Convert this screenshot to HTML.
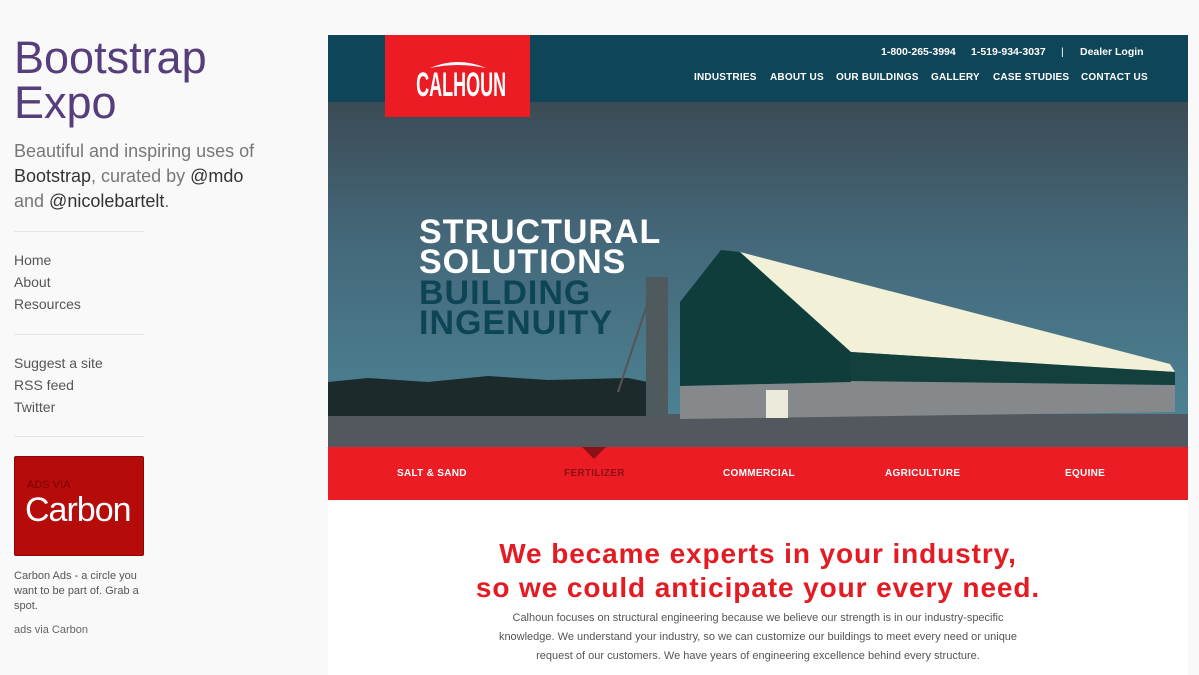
<!DOCTYPE html>
<html><head><style>
*{margin:0;padding:0;box-sizing:border-box}
body{width:1199px;height:671px;overflow:hidden;background:#f9f9f9;font-family:"Liberation Sans",sans-serif;position:relative}
h1{position:absolute;left:14px;top:35px;font-weight:400;font-size:45px;line-height:45px;color:#563d7c;width:260px}
.tag{position:absolute;left:14px;top:139px;font-size:18px;line-height:25px;color:#777;width:260px}
.tag b{font-weight:400;color:#333}
.hr{position:absolute;left:14px;width:130px;border-top:1px solid #e5e5e5}
.nav{position:absolute;left:14px;font-size:14px;line-height:22px;color:#555}
.ad{position:absolute;left:14px;top:456px;width:130px;height:100px;background:#b50b0b;border:1px solid #8a0505;border-radius:2px;color:#fff;overflow:hidden}
.small{position:absolute;left:14px;font-size:11px;line-height:15px;color:#555;width:130px}
.panel{position:absolute;left:328px;top:35px;width:860px;height:640px;background:#fff;overflow:hidden}
.hdr{position:absolute;left:0;top:0;width:860px;height:67px;background:#0f4558}
.logo{position:absolute;left:57px;top:0;width:145px;height:82px;background:#ec1c24;z-index:3}
.logo span{display:block;position:absolute;left:-3px;width:145px;top:31px;line-height:38px;text-align:center;color:#fff;font-weight:700;font-size:34px;transform:scaleX(.53)}
.top{position:absolute;top:11px;font-size:10.5px;font-weight:700;color:#fff}
.mn{position:absolute;top:37px;font-size:10px;font-weight:700;color:#fff;letter-spacing:.2px}
.hero{position:absolute;left:0;top:67px;width:860px;height:345px}
.ht{position:absolute;left:91px;font-weight:900;font-size:34px;line-height:30px;letter-spacing:1px}
.red{position:absolute;left:0;top:412px;width:860px;height:53px;background:#ec1c24}
.red span{position:absolute;top:21px;font-size:10px;font-weight:700;color:#fff;letter-spacing:.3px}
h2{position:absolute;left:0;width:860px;top:502px;text-align:center;color:#e31b23;font-size:28px;line-height:34px;font-weight:900;letter-spacing:.9px}
p.c{position:absolute;left:162px;width:536px;top:574px;text-align:center;font-size:11px;line-height:19px;color:#555}
</style></head><body>
<h1>Bootstrap Expo</h1>
<div class="tag">Beautiful and inspiring uses of <b>Bootstrap</b>, curated by <b>@mdo</b> and <b>@nicolebartelt</b>.</div>
<div class="hr" style="top:231px"></div>
<div class="nav" style="top:249px">Home<br>About<br>Resources</div>
<div class="hr" style="top:334px"></div>
<div class="nav" style="top:352px">Suggest a site<br>RSS feed<br>Twitter</div>
<div class="hr" style="top:436px"></div>
<div class="ad"><div style="position:absolute;left:12px;top:22px;font-size:11px;color:#7a0000">ADS VIA</div><div style="position:absolute;left:10px;top:34px;font-size:34px;letter-spacing:-1px">Carbon</div></div>
<div class="small" style="top:569px">Carbon Ads - a circle you want to be part of. Grab a spot.</div>
<div class="small" style="top:623px;color:#666">ads via Carbon</div>
<div class="panel">
<div class="hdr"></div>
<div class="logo"><svg style="position:absolute;left:43px;top:23px" width="60" height="12"><path d="M2 10 Q30 -2 58 10 Q30 4 2 10Z" fill="#fff"/></svg><span>CALHOUN</span></div>
<div class="top" style="left:553px">1-800-265-3994</div>
<div class="top" style="left:643px">1-519-934-3037</div>
<div class="top" style="left:733px;font-weight:400">|</div>
<div class="top" style="left:752px">Dealer Login</div>
<div class="mn" style="left:366px">INDUSTRIES</div>
<div class="mn" style="left:442px">ABOUT US</div>
<div class="mn" style="left:508px">OUR BUILDINGS</div>
<div class="mn" style="left:603px">GALLERY</div>
<div class="mn" style="left:665px">CASE STUDIES</div>
<div class="mn" style="left:753px">CONTACT US</div>
<div class="hero"><svg width="860" height="345">
<defs><linearGradient id="s" x1="0" y1="0" x2="0" y2="1"><stop offset="0" stop-color="#3b4b55"/><stop offset=".4" stop-color="#44687a"/><stop offset="1" stop-color="#4d8696"/></linearGradient></defs>
<rect width="860" height="345" fill="url(#s)"/>
<rect y="312" width="860" height="33" fill="#52585e"/>
<path d="M0 280 L40 276 L100 280 L160 274 L220 278 L300 276 L320 280 L320 314 L0 314Z" fill="#1d2a2c"/>
<path d="M352 282 L523 278 L847 283 L847 310 L352 317Z" fill="#85898b"/>
<path d="M352 200 L393 148 L412 150 L523 250 L523 280 L352 284Z" fill="#0f3d3c"/>
<path d="M412 150 L842 262 L847 270 L523 250Z" fill="#f2f0d6"/>
<path d="M523 250 L847 270 L847 283 L523 279Z" fill="#133f3d"/>
<rect x="438" y="288" width="22" height="28" fill="#eceadb"/>
<rect x="318" y="175" width="22" height="140" fill="#4f5a5e"/>
<line x1="290" y1="290" x2="320" y2="200" stroke="#555" stroke-width="2"/>
</svg>
<div class="ht" style="top:115px;color:#fff">STRUCTURAL<br>SOLUTIONS</div>
<div class="ht" style="top:176px;color:#0d4456">BUILDING<br>INGENUITY</div>
</div>
<div class="red">
<svg style="position:absolute;left:254px;top:0" width="24" height="12"><path d="M0 0H24L12 12Z" fill="#8e1016"/></svg>
<span style="left:69px">SALT &amp; SAND</span>
<span style="left:236px;color:#8e1016">FERTILIZER</span>
<span style="left:395px">COMMERCIAL</span>
<span style="left:557px">AGRICULTURE</span>
<span style="left:737px">EQUINE</span>
</div>
<h2>We became experts in your industry,<br>so we could anticipate your every need.</h2>
<p class="c">Calhoun focuses on structural engineering because we believe our strength is in our industry-specific knowledge. We understand your industry, so we can customize our buildings to meet every need or unique request of our customers. We have years of engineering excellence behind every structure.</p>
</div>
</body></html>
